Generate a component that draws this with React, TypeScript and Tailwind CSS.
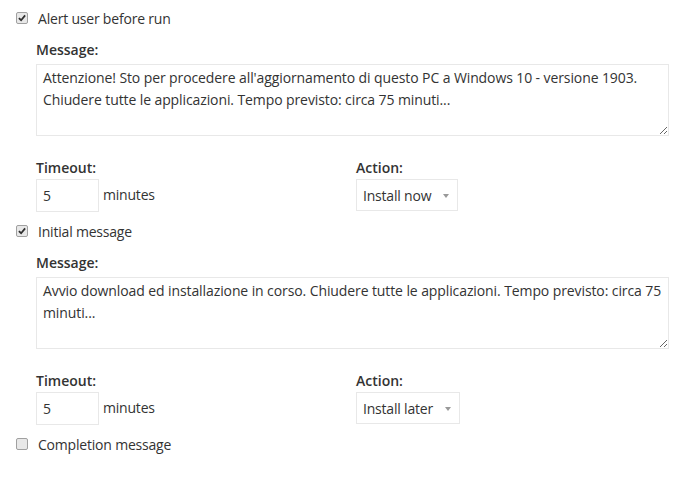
import { useState } from "react";

type BlockProps = {
  label: string;
  checked: boolean;
  message?: string;
  action?: string;
  first?: boolean;
};

const Check = ({ checked }: { checked: boolean }) => (
  <span className="w-[12px] h-[12px] rounded-[2px] border border-[#a0a0a0] bg-[#e8e8e8] flex items-center justify-center">
    {checked && (
      <svg width="8" height="8" viewBox="0 0 9 9">
        <path d="M1 4.6 L3.5 7 L8 1.6" fill="none" stroke="#2f2f2f" strokeWidth="2" />
      </svg>
    )}
  </span>
);

const Block = ({ label, checked, message, action, first }: BlockProps) => {
  const [text, setText] = useState(message ?? "");
  return (
    <div className={first ? "" : "mt-[9px]"}>
      {/* toggle row */}
      <label className="h-5 flex items-center pl-4 gap-[10px] tracking-[-0.2px]">
        <Check checked={checked} />
        <span>{label}</span>
      </label>

      {message !== undefined && (
        <div className="pl-9 pr-5">
          <div className="mt-3 mb-1 leading-5 font-semibold">Message:</div>
          <textarea
            value={text}
            wrap="off"
            onChange={(e) => setText(e.target.value)}
            className="block w-full h-[72px] border border-[#e8e8e8] px-[6px] pt-[2px] leading-[22px] text-[#333] outline-none overflow-hidden tracking-[-0.1px]"
          />

          <div className="mt-[22px] grid grid-cols-[320px_1fr]">
            <div>
              <div className="leading-5 mb-px font-semibold">Timeout:</div>
              <div className="flex items-center gap-1">
                <input
                  defaultValue="5"
                  className="w-[63px] h-[33px] border border-[#e8e8e8] px-[6px] outline-none"
                />
                <span className="tracking-[-0.2px] -mt-[2px]">minutes</span>
              </div>
            </div>
            <div>
              <div className="leading-5 mb-px font-semibold">Action:</div>
              <div className="inline-flex items-center h-[32px] border border-[#e8e8e8] pl-[6px] pr-[8px] gap-[12px]">
                <span className="tracking-[-0.2px]">{action}</span>
                <span className="w-0 h-0 border-l-[3px] border-r-[3px] border-t-[4px] border-l-transparent border-r-transparent border-t-[#999] mt-[2px]" />
              </div>
            </div>
          </div>
        </div>
      )}
    </div>
  );
};

export default function App() {
  return (
    <div className="w-[689px] h-[483px] bg-white pt-2 text-[14px] text-[#333] font-['Open_Sans',sans-serif]">
      <Block
        first
        checked
        label="Alert user before run"
        message={"Attenzione! Sto per procedere all'aggiornamento di questo PC a Windows 10 - versione 1903.\nChiudere tutte le applicazioni. Tempo previsto: circa 75 minuti..."}
        action="Install now"
      />
      <Block
        checked
        label="Initial message"
        message={"Avvio download ed installazione in corso. Chiudere tutte le applicazioni. Tempo previsto: circa 75\nminuti..."}
        action="Install later"
      />
      <Block checked={false} label="Completion message" />
    </div>
  );
}
